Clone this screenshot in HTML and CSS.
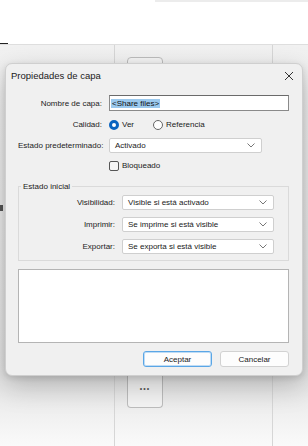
FILE: index.html
```html
<!DOCTYPE html>
<html lang="es">
<head>
<meta charset="utf-8">
<link rel="stylesheet" href="styles.css">
</head>
<body>
<div class="top">
  <div class="top-strip"></div>
  <div class="top-mark"></div>
</div>
<div class="workspace">
  <div class="col col-left"><span class="edge-mark"></span></div>
  <div class="col col-mid">
    <div class="tile tile-top"></div>
    <div class="tile tile-more">•••</div>
  </div>
  <div class="col col-right"></div>
</div>

<div class="dialog">
  <div class="titlebar">
    <span class="title">Propiedades de capa</span>
    <svg class="close" width="10" height="10" viewBox="0 0 10 10"><path d="M1 1L9 9M9 1L1 9" stroke="#333" stroke-width="1"/></svg>
  </div>
  <div class="content">
    <div class="form">
      <label class="lbl">Nombre de capa:</label>
      <div class="input"><span class="sel">&lt;Share files&gt;</span></div>

      <label class="lbl">Calidad:</label>
      <div class="radios">
        <span class="radio on"></span><span class="rtext">Ver</span>
        <span class="radio off"></span><span class="rtext">Referencia</span>
      </div>

      <label class="lbl">Estado predeterminado:</label>
      <div class="select short"><span>Activado</span><svg width="8" height="5" viewBox="0 0 8 5"><path d="M0.5 0.5L4 4L7.5 0.5" fill="none" stroke="#777"/></svg></div>

      <span></span>
      <div class="check-row"><span class="check"></span><span class="rtext">Bloqueado</span></div>
    </div>

    <fieldset class="group">
      <legend>Estado inicial</legend>
      <div class="gform">
        <label class="lbl">Visibilidad:</label>
        <div class="select"><span>Visible si está activado</span><svg width="8" height="5" viewBox="0 0 8 5"><path d="M0.5 0.5L4 4L7.5 0.5" fill="none" stroke="#777"/></svg></div>
        <label class="lbl">Imprimir:</label>
        <div class="select"><span>Se imprime si está visible</span><svg width="8" height="5" viewBox="0 0 8 5"><path d="M0.5 0.5L4 4L7.5 0.5" fill="none" stroke="#777"/></svg></div>
        <label class="lbl">Exportar:</label>
        <div class="select"><span>Se exporta si está visible</span><svg width="8" height="5" viewBox="0 0 8 5"><path d="M0.5 0.5L4 4L7.5 0.5" fill="none" stroke="#777"/></svg></div>
      </div>
    </fieldset>

    <div class="notes"></div>

    <div class="buttons">
      <button class="btn primary">Aceptar</button>
      <button class="btn">Cancelar</button>
    </div>
  </div>
</div>
</body>
</html>
```
FILE: styles.css
```css
* { box-sizing: border-box; }
html, body { margin: 0; padding: 0; }
body {
  width: 308px;
  height: 446px;
  overflow: hidden;
  position: relative;
  background: #fff;
  font-family: "Liberation Sans", Arial, sans-serif;
  color: #1a1a1a;
}
.top {
  height: 45px;
  position: relative;
  background: #fff;
  border-bottom: 1px solid #dedede;
}
.top-strip {
  position: absolute;
  left: 155px; right: 0; top: 0;
  height: 2px;
  background: #ececec;
}
.top-mark {
  position: absolute;
  left: 0; bottom: 0;
  width: 8px; height: 1px;
  background: #222;
}
.workspace {
  display: flex;
  height: 401px;
  background: linear-gradient(#f1f1f1 0, #e4e4e4 330px, #fafafa 401px);
}
.col-left { width: 114px; position: relative; }
.edge-mark {
  position: absolute;
  left: 0; top: 160px;
  width: 3px; height: 6px;
  background: #555;
}
.col-mid {
  width: 159px;
  border-left: 1px solid #d6d6d6;
  border-right: 1px solid #d6d6d6;
  position: relative;
}
.col-right { flex: 1; }
.tile {
  position: absolute;
  left: 12px;
  width: 36px;
  border: 1px solid #bdbdbd;
  border-radius: 3px;
  background: #f4f4f4;
}
.tile-top { top: 12px; height: 20px; border-radius: 4px 4px 0 0; }
.tile-more {
  top: 315px; height: 48px;
  border-top: none;
  border-radius: 0 0 4px 4px;
  font-size: 7px;
  line-height: 8px;
  letter-spacing: 1px;
  color: #555;
  text-align: center;
  padding-top: 25px;
}

.dialog {
  position: absolute;
  left: 5px; top: 63px;
  width: 298px; height: 313px;
  background: #f0f0f0;
  border: 1px solid #cfcfcf;
  border-radius: 7px;
  box-shadow: 0 10px 28px rgba(0,0,0,0.22), 0 2px 6px rgba(0,0,0,0.12);
}
.titlebar {
  height: 23px;
  display: flex;
  align-items: center;
  justify-content: space-between;
  padding: 0 8px 0 5px;
}
.title {
  font-family: "Liberation Sans", Arial, sans-serif;
  font-size: 9.5px;
  color: #1a1a1a;
}
.close { margin-top: 1px; }
.content {
  padding: 8px 14px 0 12px;
  font-size: 8px;
}
.form {
  display: grid;
  grid-template-columns: 84px 180px;
  column-gap: 7px;
  grid-template-rows: 16px 15px 15px 13px;
  row-gap: 6px;
  align-items: center;
}
.lbl { text-align: right; color: #222; white-space: nowrap; }
.input {
  height: 16px;
  background: #fff;
  border: 1px solid #8a8a8a;
  border-top-color: #6a6a6a;
  padding: 2px 1px;
  display: flex;
  align-items: center;
}
.sel { background: #9bc9ee; padding: 0 1px; color: #111; }
.radios { display: flex; align-items: center; }
.radio {
  width: 10px; height: 10px;
  border-radius: 50%;
  display: inline-block;
}
.radio.on { border: 3px solid #0a64c0; background: #fff; }
.radio.off { border: 1px solid #666; background: #fff; margin-left: 19px; }
.rtext { margin-left: 3px; }
.select {
  height: 15px;
  background: #fff;
  border: 1px solid #cfcfcf;
  border-radius: 2px;
  display: flex;
  align-items: center;
  justify-content: space-between;
  padding: 0 6px 0 5px;
}
.select.short { width: 153px; }
.check-row { display: flex; align-items: center; }
.check {
  width: 10px; height: 10px;
  border: 1px solid #555;
  border-radius: 2px;
  background: #f6f6f6;
}
.group {
  margin: 10px 0 0 0;
  width: 271px;
  border: 1px solid #dadada;
  padding: 4px 14px 6px 0;
  min-inline-size: 0;
}
.group legend {
  padding: 0 2px;
  margin-left: 2px;
  font-size: 8px;
}
.gform {
  display: grid;
  grid-template-columns: 96px 152px;
  column-gap: 7px;
  grid-auto-rows: 15px;
  row-gap: 7px;
  align-items: center;
}
.notes {
  margin-top: 8px;
  width: 271px;
  height: 74px;
  background: #fff;
  border: 1px solid #b4b4b4;
}
.buttons {
  display: flex;
  justify-content: flex-end;
  gap: 8px;
  width: 271px;
  margin-top: 8px;
}
.btn {
  width: 69px; height: 16px;
  font-family: "Liberation Sans", Arial, sans-serif;
  font-size: 8px;
  color: #1a1a1a;
  background: #fdfdfd;
  border: 1px solid #d2d2d2;
  border-radius: 3px;
  padding: 0;
}
.btn.primary { border: 1px solid #5aa6e6; box-shadow: inset 0 0 0 1px #bfdcf5; }
```
